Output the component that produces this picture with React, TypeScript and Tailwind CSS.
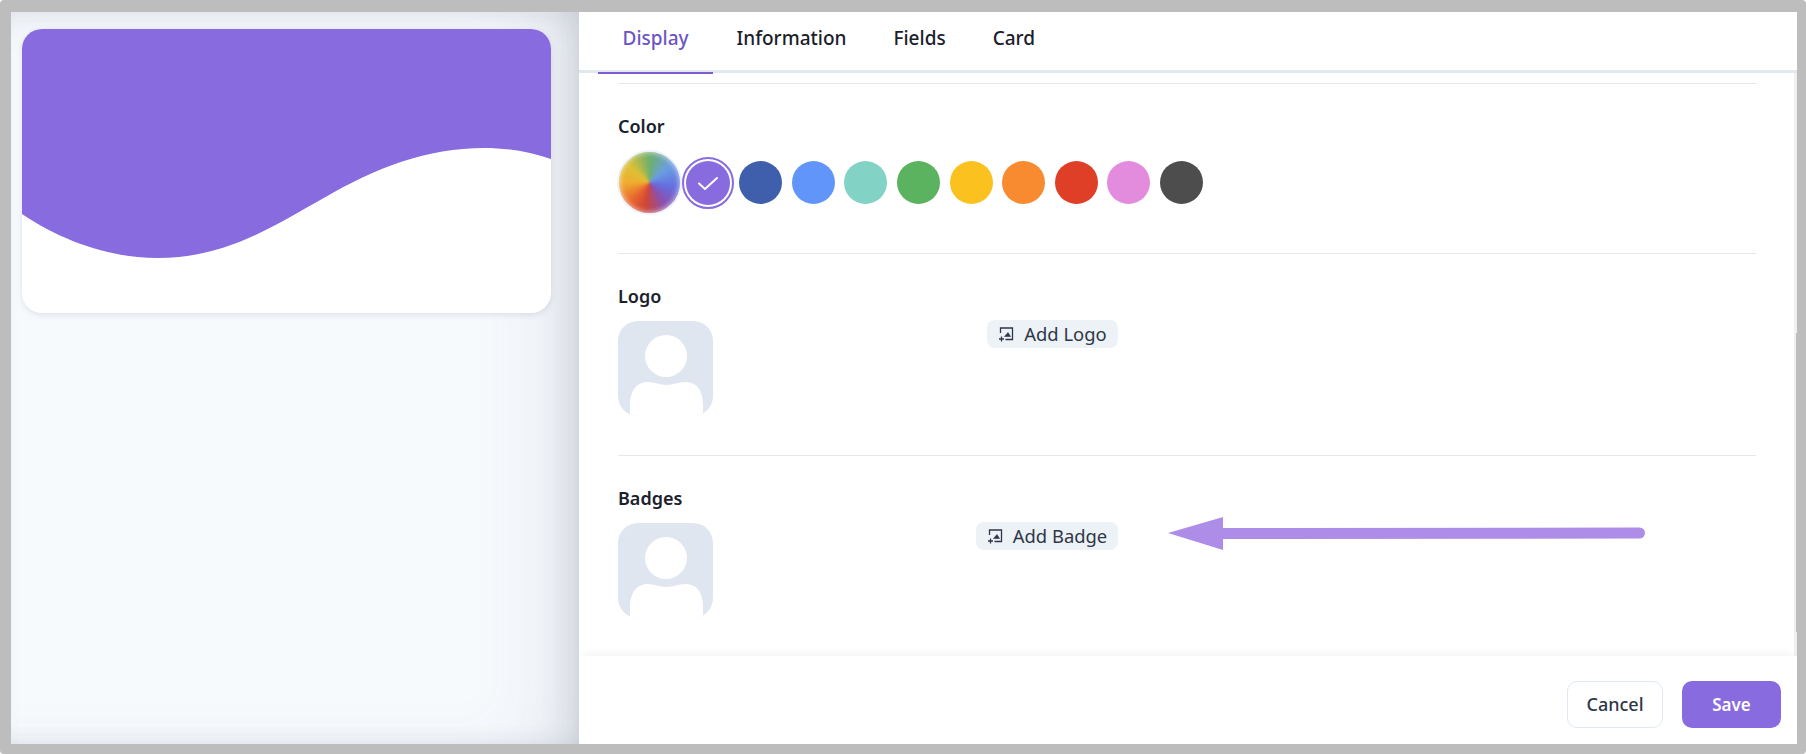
import React from "react";

const font = { fontFamily: '"Noto Sans", "Open Sans", sans-serif' };

function Avatar() {
  return (
    <div className="w-[95px] h-[95px] rounded-[20px] bg-[#e0e6f0] overflow-hidden">
      <svg viewBox="1 0 95 95" className="w-[95px] h-[95px] block">
        <circle cx="49" cy="35" r="21" fill="#fff" />
        <path d="M13 95V84C13 70 20 61 30 61C38 61 42 64 49.5 64C57 64 61 61 69 61C80 61 86 70 86 84V95Z" fill="#fff" />
      </svg>
    </div>
  );
}

function AddIcon() {
  return (
    <svg viewBox="0 0 16 16" className="w-[16px] h-[16px] shrink-0" fill="none" stroke="#2d3748" strokeWidth="1.3">
      <path d="M2.5 7V2H14.5V13.5H7.5" />
      <path d="M6.5 10.5L10 6.5L12.5 10.5Z" fill="#2d3748" strokeWidth="0.6" />
      <path d="M3.5 10.5V15.5M1 13H6" />
    </svg>
  );
}

function AddButton({ label, width }: { label: string; width: string }) {
  return (
    <button className={`${width} h-[28px] -mt-px flex items-center justify-center gap-[10px] rounded-lg bg-[#edf2f7] text-[18.4px] font-normal text-[#2d3748]`}>
      <AddIcon />
      {label}
    </button>
  );
}

const colors = ["bg-[#3f5fad]", "bg-[#6295f9]", "bg-[#82d2c6]", "bg-[#5bb35f]", "bg-[#fbc21f]", "bg-[#f88b2f]", "bg-[#df3f27]", "bg-[#e38bdd]", "bg-[#4d4d4d]"];

export default function App() {
  return (
    <div style={font} className="relative w-[1806px] h-[754px] overflow-hidden bg-[#bdbdbd] rounded-[4px] pt-[12px] pl-[11px] pr-[9px] pb-[10px] flex">
      <aside className="w-[568px] h-full bg-[#f7fafd] pt-[17px] pl-[11px] shadow-[inset_-60px_0_80px_-30px_rgba(60,65,95,0.1),inset_-20px_0_30px_-10px_rgba(60,65,95,0.13),inset_0_24px_30px_-14px_rgba(60,65,95,0.05),inset_0_-14px_18px_-10px_rgba(60,65,95,0.05)]">
        <div className="w-[529px] h-[284px] rounded-[20px] bg-white overflow-hidden shadow-[0_2px_6px_rgba(50,60,90,0.12)]">
          <svg viewBox="0 0 529 284" className="block w-[529px] h-[284px]">
            <path d="M0 185C40 212 88 229 136 229C205 229 255 195 300 170C355 138 405 119 462 119C487 119 508 123 529 130V0H0Z" fill="#886bdf" />
          </svg>
        </div>
      </aside>

      <main className="flex-1 h-full bg-white flex flex-col">
        <nav className="h-[61px] shrink-0 border-b-[3px] border-[#e2e8f0] pl-[19px] flex">
          <div className="h-[62px] px-[24.5px] pt-[11px] border-b-2 border-[#7b5fd0] text-[19px] leading-[30px] font-medium text-[#6b54c6]">Display</div>
          <div className="px-[23.5px] pt-[11px] text-[19px] leading-[30px] font-medium text-[#1a202c]">Information</div>
          <div className="px-[23.5px] pt-[11px] text-[19px] leading-[30px] font-medium text-[#1a202c]">Fields</div>
          <div className="px-[23.5px] pt-[11px] text-[19px] leading-[30px] font-medium text-[#1a202c]">Card</div>
        </nav>

        <div className="flex-1 min-h-0 overflow-hidden border-r-[3px] border-[#f0f0f0] pt-[10px] pl-[39px] pr-[38px]">
          <section className="border-t border-b border-[#e5e7eb] pt-[30px] pb-[40px]">
            <h3 className="text-[18px] leading-[24px] font-semibold text-[#1a202c]">Color</h3>
            <div className="mt-[14px] flex items-center">
              <div className="relative ml-[1px] w-[61px] h-[61px] rounded-full ring-2 ring-[#eef1f7] overflow-hidden">
                <div className="w-full h-full scale-110 blur-[1px] bg-[conic-gradient(#6eb06c_0deg,#6a9ee0_50deg,#6470e0_100deg,#8a50b0_145deg,#d04535_190deg,#e8662f_225deg,#f0ae30_270deg,#dcc035_310deg,#6eb06c_360deg)]" />
                <div className="absolute inset-0 rounded-full shadow-[inset_0_0_5px_1px_rgba(255,255,255,0.55)]" />
              </div>
              <div className="ml-[2px] w-[52px] h-[52px] rounded-full border-2 border-[#886bdf] p-[2px]">
                <div className="w-full h-full rounded-full bg-[#886bdf] flex items-center justify-center">
                  <svg viewBox="0 0 20 20" className="w-[20px] h-[20px]" fill="none" stroke="#fff" strokeWidth="2" strokeLinecap="round" strokeLinejoin="round">
                    <path d="M1 10.5L7 16L19 5" />
                  </svg>
                </div>
              </div>
              <div className="ml-[5px] flex gap-[9.625px]">
                {colors.map((c) => (
                  <div key={c} className={`${c} w-[43px] h-[43px] rounded-full`} />
                ))}
              </div>
            </div>
          </section>

          <section className="border-b border-[#e5e7eb] pt-[30px] pb-[39px]">
            <h3 className="text-[18px] leading-[24px] font-semibold text-[#1a202c]">Logo</h3>
            <div className="mt-[13px] w-[500px] flex justify-between items-start">
              <Avatar />
              <AddButton label="Add Logo" width="w-[131px]" />
            </div>
          </section>

          <section className="pt-[30px]">
            <h3 className="text-[18px] leading-[24px] font-semibold text-[#1a202c]">Badges</h3>
            <div className="mt-[13px] w-[500px] flex justify-between items-start">
              <Avatar />
              <AddButton label="Add Badge" width="w-[142px]" />
            </div>
          </section>
        </div>

        <footer className="h-[88px] shrink-0 bg-white shadow-[0_-6px_10px_-5px_rgba(40,40,60,0.07)] pr-[16px] pt-[25px] flex justify-end items-start gap-[19px]">
          <button className="w-[96px] h-[47px] rounded-[10px] border border-[#e2e8f0] bg-white text-[18px] font-medium text-[#2d3748]">Cancel</button>
          <button className="w-[99px] h-[47px] rounded-[10px] bg-[#886bdf] text-[17px] font-semibold text-white">Save</button>
        </footer>
      </main>

      <div className="absolute left-[1796px] top-[333px] w-px h-[299px] bg-[#bdbdbd]" />

      <svg viewBox="0 0 478 34" className="absolute left-[1168px] top-[517px] w-[478px] h-[34px]">
        <path d="M0 16L55 0V33Z" fill="#ae8de8" />
        <path d="M55 16.5L471.5 16" stroke="#ae8de8" strokeWidth="11" strokeLinecap="round" />
      </svg>
    </div>
  );
}
